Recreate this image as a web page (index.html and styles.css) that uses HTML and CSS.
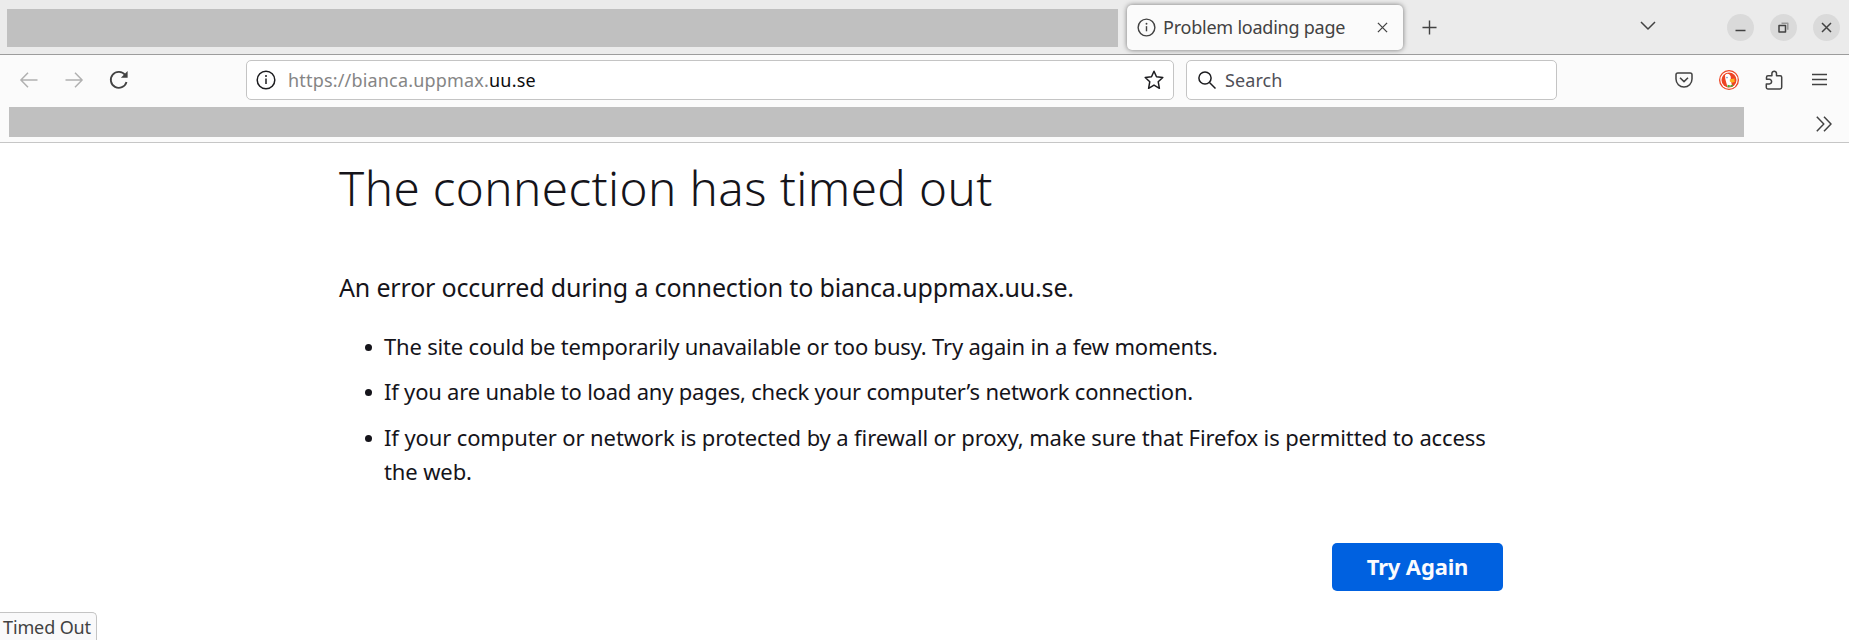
FILE: index.html
```html
<!DOCTYPE html>
<html lang="en">
<head>
<meta charset="utf-8">
<title>Problem loading page</title>
<link rel="stylesheet" href="styles.css">
</head>
<body>
<header class="tabbar">
  <div class="tabs-redacted"></div>
  <div class="tab">
    <svg class="icon tab-info" viewBox="0 0 20 20"><circle cx="10" cy="10" r="8.8"/><path d="M10 8.6v5.4"/><circle class="dot" cx="10" cy="6" r="1"/></svg>
    <span class="tab-title">Problem loading page</span>
    <svg class="icon tab-close" viewBox="0 0 12 12"><path d="M1 1l10 10M11 1L1 11"/></svg>
  </div>
  <svg class="icon new-tab" viewBox="0 0 16 16"><path d="M8 .5v15M.5 8h15"/></svg>
  <svg class="icon all-tabs" viewBox="0 0 16 10"><path d="M1 1l7 7 7-7"/></svg>
  <div class="window-controls">
    <span class="control"><svg class="icon" viewBox="0 0 27 27"><path d="M8.5 16.5h10"/></svg></span>
    <span class="control"><svg class="icon" viewBox="0 0 27 27"><path d="M9 11.500h6.500v6.500H9z"/><path class="faint" d="M11.500 9.200h6.300v6.600"/></svg></span>
    <span class="control"><svg class="icon" viewBox="0 0 27 27"><path d="M9 9l9 9M18 9l-9 9"/></svg></span>
  </div>
</header>
<nav class="toolbar">
  <svg class="icon back" viewBox="0 0 18 16"><path d="M17.500 8H1M8 .8L.9 8 8 15.200"/></svg>
  <svg class="icon forward" viewBox="0 0 18 16"><path d="M.5 8H17M10 .8L17.100 8 10 15.200"/></svg>
  <svg class="icon reload" viewBox="0 0 20 20"><path d="M16.200 5A8 8 0 1 0 17.500 12"/><path class="solid" d="M18.600 1v6.700h-6.700z"/></svg>
  <div class="field url">
    <svg class="icon dark url-info" viewBox="0 0 20 20"><circle cx="10" cy="10" r="8.800"/><path d="M10 8.600v5.400"/><circle class="dot" cx="10" cy="6" r="1"/></svg>
    <span class="url-text">https://bianca.uppmax.<b>uu.se</b></span>
    <svg class="icon dark star" viewBox="0 0 20 20"><path d="M10 1.200l2.500 5.500 6.300.8-4.600 4.200 1.200 6.600L10 15.100l-5.400 3.200 1.200-6.600L1.200 7.500l6.300-.8z"/></svg>
  </div>
  <div class="field search">
    <svg class="icon dark magnifier" viewBox="0 0 18 18"><circle cx="7" cy="7" r="6.100"/><path d="M11.500 11.500l6 6"/></svg>
    <span class="search-text">Search</span>
  </div>
  <div class="actions">
    <svg class="icon pocket" viewBox="0 0 18 16"><path d="M2.800 1h12.400Q17 1 17 2.800V7a8 8 0 0 1-16 0V2.800Q1 1 2.800 1z"/><path d="M5 5.700l4 3.900 4-3.900"/></svg>
    <svg class="duck" viewBox="0 0 20 20"><circle cx="10" cy="10" r="10" fill="#ee4423"/><circle cx="10" cy="10" r="8.700" fill="#fff"/><circle cx="10" cy="10" r="7.500" fill="#ee4423"/><path d="M6 5.200Q8 3 10.300 4.300q2 1.400 1.500 5L12.800 15l-1.800 1.800-2.600-.4Q7 12 6.300 9z" fill="#fff"/><path d="M10.800 9.300l5-.8-.5 1.500.7 1.500-2.500 1.200-2.700-1.200z" fill="#fcb020"/><path d="M8.500 14.800l3 .6 2.300-.8v2.200l-2.300-.4-2.800 1z" fill="#43ad35"/><circle cx="8" cy="7.600" r=".8" fill="#6f8fc0"/></svg>
    <svg class="icon puzzle" viewBox="0 0 18 20"><path d="M2.800 19h12.200q1.700 0 1.700-1.700V7.200q0-1.500-1.500-1.500h-3.700V3.500a2.300 2.300 0 0 0-4.600 0v2.200H3Q1.500 5.700 1.500 7.200v2.100h2.800a2.300 2.300 0 0 1 0 4.600H1.300v3.700Q1.300 19 2.800 19z"/></svg>
    <svg class="icon menu" viewBox="0 0 15 14"><path d="M0 1.500h15M0 6.500h15M0 11.500h15"/></svg>
  </div>
</nav>
<div class="bookmarks">
  <div class="bookmarks-redacted"></div>
  <svg class="icon overflow" viewBox="0 0 16 16"><path d="M.8.800L7.800 8l-7 7.200M8 .8L15 8l-7 7.200"/></svg>
</div>
<main class="page">
  <h1>The connection has timed out</h1>
  <p class="short-desc">An error occurred during a connection to bianca.uppmax.uu.se.</p>
  <ul>
    <li class="line-a">The site could be temporarily unavailable or too busy. Try again in a few moments.</li>
    <li class="line-b">If you are unable to load any pages, check your computer’s network connection.</li>
    <li class="line-c">If your computer or network is protected by a firewall or proxy, make sure that Firefox is permitted to access<br>the web.</li>
  </ul>
  <div class="buttons"><button class="retry">Try Again</button></div>
</main>
<div class="status">Timed Out</div>
</body>
</html>
```

FILE: styles.css
```css
* { box-sizing: border-box; }
body {
  margin: 0;
  height: 640px;
  overflow: hidden;
  background: #fff;
  color: #15141a;
  font-family: "Noto Sans", "Open Sans", sans-serif;
  font-size: 18px;
  white-space: nowrap;
}
.icon {
  display: block;
  flex: none;
  fill: none;
  stroke: #424242;
  stroke-width: 1.5;
  stroke-linejoin: round;
}
.icon .dot, .icon .solid { fill: #424242; stroke: none; }
.icon .faint { stroke: #999; }
.dark { stroke: #1c1c1f; }
.dark .dot { fill: #1c1c1f; }

.tabbar {
  display: flex;
  align-items: center;
  height: 55px;
  padding-left: 7px;
  background: #ebebeb;
  border-bottom: 1px solid #9c9c9c;
}
.tabs-redacted { width: 1111px; height: 38px; margin-top: 2px; background: #c0c0c0; }
.tab {
  display: flex;
  align-items: center;
  width: 276px;
  height: 45px;
  margin-left: 9px;
  padding-left: 10px;
  border-radius: 5px;
  background: #fbfbfb;
  box-shadow: 0 0 5px rgba(0, 0, 0, .5);
}
.tab-info { width: 19px; height: 19px; }
.tab-title { width: 214px; margin-left: 7px; color: #424242; letter-spacing: -.23px; }
.tab-close { width: 11px; height: 11px; stroke-width: 1.4; }
.new-tab { width: 15px; height: 15px; margin-left: 19px; }
.all-tabs { width: 16px; height: 10px; margin: -2px 0 0 203px; }
.window-controls { display: flex; gap: 16px; margin-left: 71px; }
.control { width: 27px; height: 27px; border-radius: 50%; background: #dadada; }

.toolbar {
  display: flex;
  align-items: center;
  height: 50px;
  padding-left: 20px;
  background: #fbfbfb;
}
.back, .forward { width: 18px; height: 16px; stroke: #b1b1b1; }
.forward { margin-left: 27px; }
.reload { width: 20px; height: 20px; margin-left: 26px; stroke-width: 1.8; }
.field {
  display: flex;
  align-items: center;
  height: 40px;
  border: 1px solid #c4c4c4;
  border-radius: 5px;
  background: #fff;
}
.url { width: 928px; margin-left: 117px; padding-left: 9px; }
.url-info { width: 20px; height: 20px; }
.url-text { width: 843px; margin-left: 12px; color: #858585; letter-spacing: .18px; }
.url-text b { color: #0c0c0d; font-weight: 400; }
.star { width: 20px; height: 20px; margin-left: 13px; }
.search { width: 371px; margin-left: 12px; padding-left: 11px; }
.magnifier { width: 18px; height: 18px; }
.search-text { margin-left: 9px; color: #4f4f57; letter-spacing: .1px; }
.actions { display: flex; align-items: center; margin-left: 118px; }
.pocket { width: 18px; height: 16px; }
.duck { width: 20px; height: 20px; margin-left: 26px; }
.puzzle { width: 18px; height: 20px; margin-left: 26px; }
.menu { width: 15px; height: 14px; margin-left: 29px; }

.bookmarks {
  display: flex;
  height: 38px;
  padding: 2px 0 0 9px;
  background: #fbfbfb;
  border-bottom: 1px solid #c6c6c6;
}
.bookmarks-redacted { width: 1735px; height: 30px; background: #c0c0c0; }
.overflow { width: 16px; height: 16px; margin: 9px 0 0 72px; }

.page { width: 1164px; margin-left: 339px; }
h1 {
  margin: 0;
  padding-top: 15px;
  font-size: 47.5px;
  font-weight: 300;
  line-height: 60px;
  letter-spacing: .43px;
}
.short-desc { margin: 51px 0 0; font-size: 25px; line-height: 36px; letter-spacing: -.175px; }
ul { margin: 24px 0 0; padding: 0 0 0 45px; font-size: 22px; line-height: 34px; }
li { position: relative; margin-bottom: 11.400px; list-style: none; }
.line-a { letter-spacing: -.19px; }
.line-b { letter-spacing: -.21px; }
.line-c { letter-spacing: -.12px; }
li::before {
  content: "";
  position: absolute;
  left: -19px;
  top: 15px;
  width: 7px;
  height: 7px;
  border-radius: 50%;
  background: #15141a;
}
.buttons { display: flex; justify-content: flex-end; margin-top: 55px; }
.retry {
  width: 171px;
  height: 48px;
  padding: 0 0 2px;
  border: 0;
  border-radius: 5px;
  background: #0061e0;
  color: #fbfbfe;
  font: 700 22px "Noto Sans", "Open Sans", sans-serif;
  letter-spacing: -.15px;
}
.status {
  position: absolute;
  left: 0;
  bottom: 0;
  width: 97px;
  height: 28px;
  padding-left: 3px;
  border: solid #c4c4c4;
  border-width: 1px 1px 0 0;
  border-top-right-radius: 5px;
  background: #f9f9fa;
  color: #424242;
  line-height: 28px;
  letter-spacing: -.12px;
}
```
